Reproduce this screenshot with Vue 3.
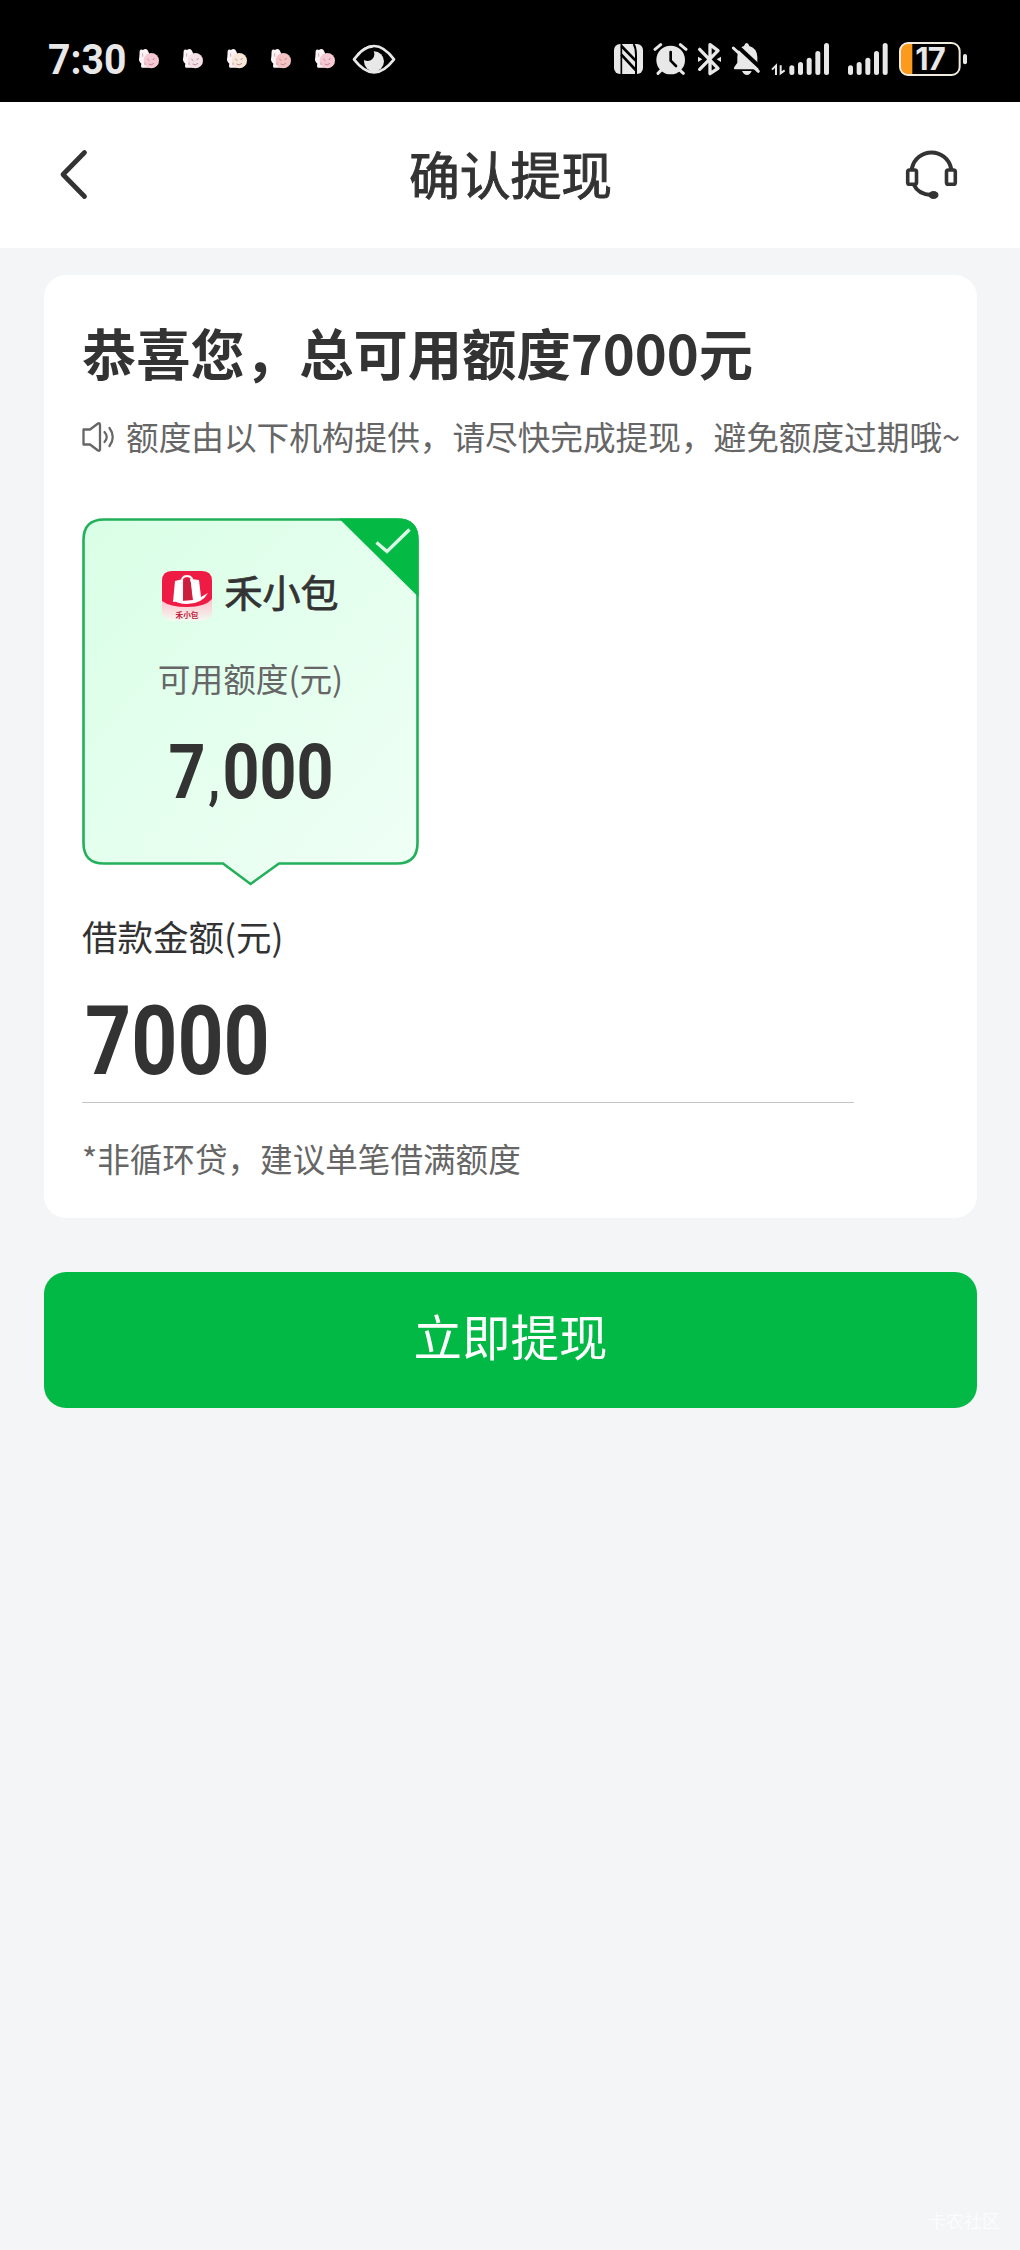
<script setup>
const stickers = ['#f6c9d3', '#f3dfe6', '#f8e6d8', '#f5c3c3', '#f6c9d3']
const bars1 = [[595, 136], [621, 126], [647, 113], [673, 93], [699, 69]]
const bars2 = [[771, 136], [797, 126], [823, 113], [849, 93], [875, 69]]
</script>

<template>
  <div class="page">
    <header class="status">
      <span class="time"><span class="time-text">7:30</span></span>
      <div class="stickers">
        <svg v-for="(c, i) in stickers" :key="i" width="22" height="40" viewBox="324 60 66 120">
          <path d="M329 92 q4 -6 10 -2 q8 -7 14 1 l4 8 v44 h-22 q-4 -4 -1 -12 q-10 -8 -6 -20 z" fill="#fbf3f5" />
          <circle cx="364" cy="122" r="23" :fill="c" />
          <path d="M352 117 l6 5 M374 114 l-6 6 M356 132 q8 6 16 -2" stroke="#b98a98" stroke-width="3" fill="none" />
          <path d="M338 100 v10 M345 128 v8" stroke="#a98e96" stroke-width="2" />
        </svg>
      </div>
      <svg class="eye" width="44" height="40" viewBox="966 60 132 120">
        <path d="M972 118 Q1032 38 1092 118 Q1032 196 972 118z" fill="none" stroke="#e8e8e8" stroke-width="8" stroke-linejoin="round" />
        <circle cx="1032" cy="124" r="30" fill="#e8e8e8" />
        <circle cx="1013" cy="103" r="20" fill="#000" />
        <path d="M984 104 Q1002 82 1028 79" fill="none" stroke="#e8e8e8" stroke-width="8" />
      </svg>

      <div class="sys">
        <svg width="31" height="40" viewBox="66 60 93 120">
          <rect x="69" y="72" width="87" height="90" rx="18" fill="#e8e8e8" />
          <path d="M91 72 V162" stroke="#000" stroke-width="5" fill="none" />
          <path d="M91 78 L134 122 M91 104 L134 150" stroke="#000" stroke-width="8" fill="none" />
          <path d="M128 72 Q135 84 135 104 V162" stroke="#000" stroke-width="6" fill="none" />
        </svg>
        <svg width="35" height="40" viewBox="189 60 105 120">
          <circle cx="242" cy="120" r="43" fill="#e8e8e8" />
          <path d="M195 88 L212 74 M288 88 L271 74 M216 148 L204 160 M267 148 L280 160" stroke="#e8e8e8" stroke-width="9" stroke-linecap="round" />
          <path d="M242 96 V122 L258 138" stroke="#000" stroke-width="8" fill="none" stroke-linecap="round" stroke-linejoin="round" />
        </svg>
        <svg width="25" height="40" viewBox="321 60 75 120">
          <path d="M329 88 L384 145 L360 161 V74 L384 92 L329 148" stroke="#e8e8e8" stroke-width="10" fill="none" stroke-linecap="round" stroke-linejoin="round" />
          <path d="M324 110 l13 8 l-13 8z M393 110 l-13 8 l13 8z" fill="#e8e8e8" />
        </svg>
        <svg width="30" height="40" viewBox="420 60 90 120">
          <path d="M434 148 Q426 148 430 141 L439 128 V110 Q439 82 459 78 Q462 69 467 69 Q472 69 475 78 Q497 84 499 110 V136 L504 148z M453 153 h29 q-5 12 -14 12 t-15 -12z" fill="#e8e8e8" />
          <path d="M433 73 L510 145" stroke="#000" stroke-width="12" />
          <path d="M427 84 L502 154" stroke="#e8e8e8" stroke-width="9" stroke-linecap="round" />
        </svg>
        <svg class="sig1" width="59" height="40" viewBox="540 60 177 120">
          <path d="M543 149 L555 137 V165 M569 136 V160 L581 151" stroke="#e8e8e8" stroke-width="6" fill="none" />
          <rect v-for="b in bars1" :key="b[0]" :x="b[0]" :y="b[1]" width="15" :height="165 - b[1]" rx="7.5" fill="#e8e8e8" />
        </svg>
        <svg class="sig2" width="42" height="40" viewBox="768 60 126 120">
          <rect v-for="b in bars2" :key="b[0]" :x="b[0]" :y="b[1]" width="15" :height="165 - b[1]" rx="7.5" fill="#e8e8e8" />
        </svg>
        <div class="battery">
          <svg width="70" height="40" viewBox="924 60 210 120">
            <path d="M967 71 H952 Q932 71 932 91 V143 Q932 163 952 163 H967z" fill="#fb9a1d" />
            <rect x="930" y="69" width="179" height="96" rx="24" fill="none" stroke="#f1eadf" stroke-width="6" />
            <rect x="1119" y="102" width="12" height="31" rx="6" fill="#e8e8e8" />
          </svg>
          <span class="pct">17</span>
        </div>
      </div>
    </header>

    <nav class="nav">
      <svg class="back" width="34" height="56" viewBox="0 0 34 56">
        <path d="M28.500 5.500 L7 27.500 L28.500 49.500" fill="none" stroke="#333" stroke-width="4.8" stroke-linecap="round" stroke-linejoin="round" />
      </svg>
      <h1>确认提现</h1>
      <svg class="service" width="75" height="70" viewBox="0 0 75 70">
        <path d="M17 31 V30 A20 20 0 0 1 56 30 V31" fill="none" stroke="#333" stroke-width="4" />
        <rect x="12.7" y="32" width="8.8" height="14.2" rx="1.8" fill="none" stroke="#333" stroke-width="3.6" />
        <rect x="51.5" y="32" width="8.8" height="14.2" rx="1.8" fill="none" stroke="#333" stroke-width="3.6" />
        <path d="M19 47 Q23 56 36 57" fill="none" stroke="#333" stroke-width="4" />
        <ellipse cx="38.500" cy="57" rx="5" ry="4" fill="#333" />
      </svg>
    </nav>

    <main>
      <section class="card">
        <h2>恭喜您，总可用额度7000元</h2>
        <p class="notice">
          <svg width="34" height="32" viewBox="0 0 34 32">
            <path d="M1.500 8.500 H8 L16 2.500 Q18 1.500 18 4 V28 Q18 30.500 16 29.500 L8 23.500 H1.500z" fill="none" stroke="#666" stroke-width="2.3" stroke-linejoin="round" />
            <path d="M22.500 11 Q27 16 22.500 21 M27.500 7 Q34 16 27.500 25" fill="none" stroke="#666" stroke-width="2.2" stroke-linecap="round" />
          </svg>
          <span>额度由以下机构提供，请尽快完成提现，避免额度过期哦~</span>
        </p>

        <div class="offer">
          <svg class="frame" width="337" height="368" viewBox="0 0 337 368">
            <defs>
              <linearGradient id="mint" x1="0" y1="0" x2="1" y2="1">
                <stop offset="0" stop-color="#d9ffe6" />
                <stop offset="1" stop-color="#f0fff6" />
              </linearGradient>
            </defs>
            <path d="M22 1.500 H315 Q335.500 1.500 335.500 22 V325 Q335.500 345.500 315 345.500 H197 L168.500 366 L141 345.500 H22 Q1.500 345.500 1.500 325 V22 Q1.500 1.500 22 1.500z" fill="url(#mint)" stroke="#23b05a" stroke-width="2.600" />
            <path d="M257 0.500 H315 Q336.500 0.500 336.500 22 V79z" fill="#04b944" />
            <path d="M294.500 24.500 L305 33.500 L327.500 11.500" fill="none" stroke="#dcffe8" stroke-width="3.400" />
          </svg>
          <div class="brand">
            <svg width="50" height="50" viewBox="0 0 50 50">
              <defs>
                <linearGradient id="fade" x1="0" y1="0" x2="0" y2="1">
                  <stop offset=".6" stop-color="#ffc4cf" />
                  <stop offset="1" stop-color="#f1fbf2" />
                </linearGradient>
              </defs>
              <rect width="50" height="50" rx="9" fill="url(#fade)" />
              <path d="M0 30 V10 Q0 0 10 0 H40 Q50 0 50 10 V28 Q43 36 25 36 Q8 36 0 30z" fill="#ee1c44" />
              <path d="M13 10 L21 8 L21 30 L11 31z M28 8 L37 9 L39 26 L46 22 Q40 33 25 33 Q16 33 11 29 L20 30 L31 29z" fill="#fff" />
              <path d="M19.500 13 Q19 5 25 5 Q31 5 31 13" fill="none" stroke="#fff" stroke-width="2" />
              <path d="M22 12 L24 8 H27 L29 12 L30 29 H21z" fill="#c81f3c" />
              <text x="25" y="47" text-anchor="middle" font-size="7.600" font-weight="700" fill="#c4213a">禾小包</text>
            </svg>
            <span>禾小包</span>
          </div>
          <div class="quota-label">可用额度(元)</div>
          <div class="quota"><span class="digits">7<span class="comma">,</span>000</span></div>
        </div>

        <div class="label">借款金额(元)</div>
        <div class="amount"><span class="digits">7000</span></div>
        <p class="tip">*非循环贷，建议单笔借满额度</p>
      </section>
      <button class="submit">立即提现</button>
    </main>
    <footer>卡农社区</footer>
  </div>
</template>

<style>
body { background: #f4f5f7; }
</style>

<style scoped>
.page {
  width: 1020px;
  height: 2250px;
  display: flex;
  flex-direction: column;
  background: #f4f5f7;
  color: #333;
  font-family: "Noto Sans CJK SC", sans-serif;
  overflow: hidden;
}
h1, h2, p { margin: 0; font-weight: 400; }
svg { display: block; flex: none; }
.status {
  height: 102px;
  flex: none;
  box-sizing: border-box;
  background: #000;
  display: flex;
  align-items: flex-start;
  padding: 40px 52px 0 48px;
}
.time { width: 90px; height: 40px; }
.time-text {
  display: inline-block;
  font: 700 42.5px/40px Roboto, sans-serif;
  color: #e8e8e8;
  transform: scaleX(.92);
  transform-origin: 0 0;
}
.stickers { display: flex; gap: 22px; }
.eye { margin-left: 16px; }
.sys { display: flex; gap: 9px; margin-left: auto; }
.sig1 { margin-left: 1px; }
.sig2 { margin-left: 8px; }
.battery { position: relative; }
.pct {
  position: absolute;
  left: 15px;
  top: -1px;
  width: 34px;
  text-align: center;
  font: 700 31px/40px Inter, sans-serif;
  letter-spacing: -1px;
  color: #e8e8e8;
}
.nav {
  height: 146px;
  flex: none;
  box-sizing: border-box;
  background: #fff;
  display: flex;
  align-items: center;
  justify-content: space-between;
  padding: 0 50px 0 56px;
}
.nav h1 {
  font-size: 50.800px;
  line-height: 60px;
  -webkit-text-stroke: 1px #333;
  margin-left: 36px;
  padding-bottom: 5px;
}
.service { margin-bottom: 4px; }
main { padding: 27px 43px 0 44px; flex: 1; }
.card {
  height: 943px;
  box-sizing: border-box;
  background: #fff;
  border-radius: 22px;
  padding: 42px 0 0 38px;
}
h2 { font-size: 54.300px; line-height: 70px; font-weight: 700; white-space: nowrap; }
.notice {
  display: flex;
  align-items: center;
  margin-top: 26px;
  height: 48px;
  gap: 10px;
  font-size: 32.650px;
  line-height: 48px;
  color: #666;
  white-space: nowrap;
}
.notice span { padding-bottom: 3px; }
.offer {
  position: relative;
  width: 337px;
  height: 368px;
  margin-top: 57px;
  display: flex;
  flex-direction: column;
  align-items: center;
}
.frame { position: absolute; left: 0; top: 0; }
.brand, .quota-label, .quota { position: relative; }
.brand {
  display: flex;
  align-items: center;
  gap: 12px;
  height: 50px;
  margin-top: 53px;
  font-size: 38px;
  line-height: 56px;
  -webkit-text-stroke: .8px #333;
}
.brand span { padding-bottom: 10px; }
.brand svg { -webkit-text-stroke: 0; }
.quota-label { margin-top: 32px; font-size: 32.650px; line-height: 50px; color: #666; }
.quota { margin: 29px 0 0 2px; height: 80px; }
.digits {
  display: inline-block;
  font: 700 76px/80px Roboto, sans-serif;
  transform: scaleX(.85);
}
.comma { font-size: 56px; line-height: 1; margin: 0 3px; }
.label { margin-top: 25px; font-size: 35.500px; line-height: 50px; }
.amount { width: 772px; height: 141px; border-bottom: 1px solid #c4c4c4; }
.amount .digits {
  font-size: 97px;
  line-height: 120px;
  margin: 20px 0 0 3px;
  transform: scaleX(.83);
  transform-origin: 0 0;
}
.tip { margin-top: 30px; font-size: 32.600px; line-height: 50px; color: #666; }
.submit {
  display: block;
  width: 100%;
  height: 136px;
  box-sizing: border-box;
  margin-top: 54px;
  padding: 0 0 9px;
  border: 0;
  border-radius: 22px;
  background: #03b945;
  color: #fff;
  font: 400 48.500px/127px "Noto Sans CJK SC", sans-serif;
}
footer {
  align-self: flex-end;
  margin: 0 20px 16px 0;
  font-size: 18px;
  line-height: 28px;
  color: #fcfcfd;
}
</style>
